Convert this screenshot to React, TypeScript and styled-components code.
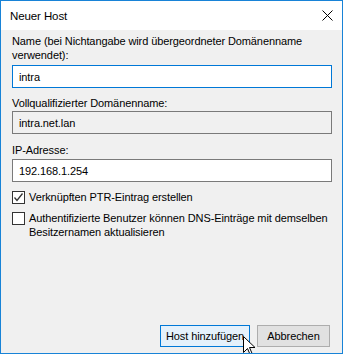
import React from "react";
import styled, { createGlobalStyle } from "styled-components";

const Global = createGlobalStyle`
  html, body { margin: 0; padding: 0; background: #f0f0f0; }
  body {
    font-family: "Liberation Sans", Arial, sans-serif;
    font-size: 11px;
    letter-spacing: -0.1px;
    color: #000;
  }
  * { box-sizing: border-box; }
`;

const Window = styled.div`
  position: relative;
  width: 343px;
  height: 354px;
  border: 1px solid #1883d7;
  background: #f0f0f0;
  display: flex;
  flex-direction: column;
  overflow: hidden;
`;

const TitleBar = styled.div`
  height: 29px;
  background: #fff;
  display: flex;
  align-items: center;
  justify-content: space-between;
  padding: 0 9px 0 9px;
`;

const Title = styled.span`
  font-size: 11.5px;
  line-height: 14px;
`;

const Content = styled.div`
  flex: 1;
  display: flex;
  flex-direction: column;
  padding: 4px 10px 6px 11px;
`;

const Label = styled.div<{ $mt?: number }>`
  line-height: 14px;
  white-space: nowrap;
  margin-top: ${(p) => p.$mt ?? 0}px;
`;

const Field = styled.div<{ $variant: "focus" | "readonly" | "normal"; $mt?: number }>`
  height: 23px;
  margin-top: ${(p) => p.$mt ?? 2}px;
  border: 1px solid ${(p) => (p.$variant === "focus" ? "#0078d7" : "#7a7a7a")};
  background: ${(p) => (p.$variant === "readonly" ? "#f0f0f0" : "#fff")};
  display: flex;
  align-items: center;
  padding-left: 6px;
  line-height: 14px;
`;

const CheckRow = styled.label<{ $mt: number }>`
  display: flex;
  align-items: flex-start;
  gap: 4px;
  margin-top: ${(p) => p.$mt}px;
`;

const Box = styled.span`
  flex: none;
  width: 13px;
  height: 13px;
  border: 1px solid #333;
  background: #fff;
  display: flex;
  align-items: center;
  justify-content: center;
`;

const CheckText = styled.span`
  line-height: 14px;
  white-space: nowrap;
  margin-top: -1px;
`;

const Footer = styled.div`
  margin-top: auto;
  display: flex;
  justify-content: flex-end;
  gap: 7px;
  padding-right: 2px;
`;

const Button = styled.button<{ $primary?: boolean }>`
  font: inherit;
  letter-spacing: inherit;
  color: #000;
  height: 22px;
  padding: 0;
  white-space: nowrap;
  width: ${(p) => (p.$primary ? 90 : 73)}px;
  border: 1px solid ${(p) => (p.$primary ? "#0078d7" : "#adadad")};
  background: ${(p) => (p.$primary ? "#e5f1fb" : "#e1e1e1")};
  line-height: 14px;
`;

const Cursor = styled.svg`
  position: absolute;
  left: 242px;
  top: 335px;
`;

export default function App() {
  return (
    <>
      <Global />
      <Window>
        <TitleBar>
          <Title>Neuer Host</Title>
          <svg width="11" height="11" viewBox="0 0 11 11">
            <path d="M0.5 0.5 L10.5 10.5 M10.5 0.5 L0.5 10.5" stroke="#000" strokeWidth="1" />
          </svg>
        </TitleBar>
        <Content>
          <Label>
            Name (bei Nichtangabe wird übergeordneter Domänenname
            <br />
            verwendet):
          </Label>
          <Field $variant="focus" $mt={3}>intra</Field>
          <Label $mt={8}>Vollqualifizierter Domänenname:</Label>
          <Field $variant="readonly" $mt={1}>intra.net.lan</Field>
          <Label $mt={9}>IP-Adresse:</Label>
          <Field $variant="normal" $mt={2}>192.168.1.254</Field>
          <CheckRow $mt={9}>
            <Box>
              <svg width="11" height="11" viewBox="0 0 11 11">
                <path d="M1.5 5.5 L4 8.5 L9.5 1.5" fill="none" stroke="#333" strokeWidth="1.3" />
              </svg>
            </Box>
            <CheckText>Verknüpften PTR-Eintrag erstellen</CheckText>
          </CheckRow>
          <CheckRow $mt={8}>
            <Box />
            <CheckText>
              Authentifizierte Benutzer können DNS-Einträge mit demselben
              <br />
              Besitzernamen aktualisieren
            </CheckText>
          </CheckRow>
          <Footer>
            <Button $primary>Host hinzufügen</Button>
            <Button>Abbrechen</Button>
          </Footer>
        </Content>
        <Cursor width="14" height="20" viewBox="0 0 14 20">
          <path
            d="M0.5 0.5 L0.5 16.5 L4.5 12.5 L7.5 19.5 L9.5 18.5 L6.5 11.5 L12 11.5 Z"
            fill="#fff"
            stroke="#000"
            strokeWidth="1"
            strokeLinejoin="miter"
          />
        </Cursor>
      </Window>
    </>
  );
}
